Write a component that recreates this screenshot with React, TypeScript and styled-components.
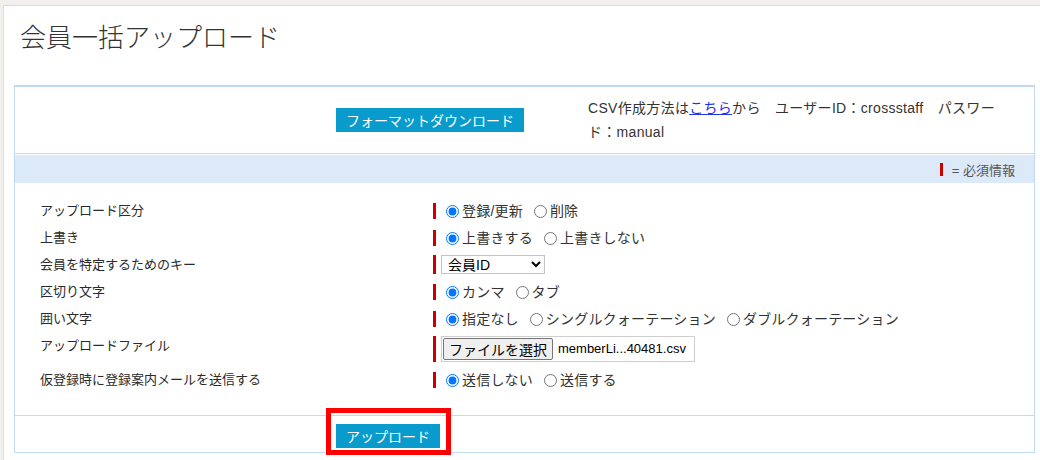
import { FC } from 'react'
import styled, { createGlobalStyle } from 'styled-components'

const GlobalStyle = createGlobalStyle`
  html, body {
    margin: 0;
    padding: 0;
    background: #f1f0ec;
    overflow: hidden;
  }
  body {
    font-family: "Liberation Sans", "Noto Sans CJK JP", sans-serif;
    color: #333;
  }
`

type Option = { label: string; checked?: boolean }
type Field =
  | { label: string; kind: 'radio'; name: string; options: Option[] }
  | { label: string; kind: 'select'; options: string[] }
  | { label: string; kind: 'file'; button: string; fileName: string }

const fields: Field[] = [
  { label: 'アップロード区分', kind: 'radio', name: 'mode', options: [{ label: '登録/更新', checked: true }, { label: '削除' }] },
  { label: '上書き', kind: 'radio', name: 'overwrite', options: [{ label: '上書きする', checked: true }, { label: '上書きしない' }] },
  { label: '会員を特定するためのキー', kind: 'select', options: ['会員ID', 'メールアドレス'] },
  { label: '区切り文字', kind: 'radio', name: 'sep', options: [{ label: 'カンマ', checked: true }, { label: 'タブ' }] },
  {
    label: '囲い文字',
    kind: 'radio',
    name: 'quote',
    options: [{ label: '指定なし', checked: true }, { label: 'シングルクォーテーション' }, { label: 'ダブルクォーテーション' }],
  },
  { label: 'アップロードファイル', kind: 'file', button: 'ファイルを選択', fileName: 'memberLi...40481.csv' },
  { label: '仮登録時に登録案内メールを送信する', kind: 'radio', name: 'mail', options: [{ label: '送信しない', checked: true }, { label: '送信する' }] },
]

const renderControl = (f: Field) => {
  if (f.kind === 'radio') {
    return f.options.map((o) => (
      <RadioLabel key={o.label}>
        <input type="radio" name={f.name} defaultChecked={o.checked} />
        {o.label}
      </RadioLabel>
    ))
  }
  if (f.kind === 'select') {
    return (
      <Select defaultValue={f.options[0]}>
        {f.options.map((o) => (
          <option key={o}>{o}</option>
        ))}
      </Select>
    )
  }
  return (
    <FileBox>
      <FileButton type="button">{f.button}</FileButton>
      <FileName>{f.fileName}</FileName>
    </FileBox>
  )
}

const App: FC = () => {
  return (
    <>
      <GlobalStyle />
      <Page>
        <Title>会員一括アップロード</Title>
        <Box>
          <TopSection>
            <BlueButton type="button">フォーマットダウンロード</BlueButton>
            <Info>
              CSV作成方法は<a href="#">こちら</a>から　ユーザーID：crossstaff　パスワード：manual
            </Info>
          </TopSection>
          <Band>
            <RequiredMark />= 必須情報
          </Band>
          <Form>
            {fields.map((f) => (
              <Row key={f.label}>
                <Label>{f.label}</Label>
                <Value>{renderControl(f)}</Value>
              </Row>
            ))}
          </Form>
          <Footer>
            <Marked>
              <BlueButton type="button">アップロード</BlueButton>
              <Highlight />
            </Marked>
          </Footer>
        </Box>
      </Page>
    </>
  )
}

const Page = styled.div`
  margin: 5px 0 0 3px;
  min-height: calc(100vh - 5px);
  box-sizing: border-box;
  background: #fff;
  border-top: 1px solid #c6ddf4;
  border-left: 1px solid #d9dfe6;
  padding-top: 12px;
`

const Title = styled.h1`
  margin: 0 0 31px 16px;
  font-family: "Noto Sans CJK JP", sans-serif;
  font-size: 26px;
  font-weight: 300;
  line-height: 36px;
  color: #333;
`

const Box = styled.div`
  margin: 0 5px 0 10px;
  border: 1px solid #c0daf4;
  border-top-width: 2px;
`

const TopSection = styled.div`
  display: flex;
  align-items: center;
  height: 66px;
  padding-left: 321px;
  gap: 64px;
  border-bottom: 1px solid #c0daf4;
`

const BlueButton = styled.button`
  height: 24px;
  padding: 0 10px;
  border: none;
  background: #0a9bcd;
  color: #fff;
  font-family: "Noto Sans CJK JP", sans-serif;
  font-size: 14px;
  line-height: 24px;
  cursor: pointer;
`

const Info = styled.div`
  width: 416px;
  font-size: 14px;
  line-height: 24px;
  letter-spacing: 0.3px;
  color: #333;

  a {
    color: #2233ee;
    text-decoration: underline;
  }
`

const Band = styled.div`
  margin-top: 1px;
  height: 28px;
  background: #dbe9f8;
  display: flex;
  align-items: center;
  justify-content: flex-end;
  padding-right: 19px;
  font-size: 13px;
  color: #555;
`

const RequiredMark = styled.span`
  display: inline-block;
  width: 3px;
  height: 13px;
  background: #cc0000;
  margin-right: 9px;
`

const Form = styled.div`
  padding: 14px 0 22px 25px;
`

const Row = styled.div`
  display: grid;
  grid-template-columns: 393px 1fr;
  align-items: start;
  padding: 4px 0;
`

const Label = styled.div`
  font-size: 13px;
  line-height: 19px;
  color: #2a2a2a;
`

const Value = styled.div`
  align-self: center;
  display: flex;
  align-items: center;
  min-height: 16px;
  border-left: 3px solid #cc0000;
  padding-left: 5px;
  font-size: 14px;
  line-height: 16px;
  letter-spacing: 0.2px;
  color: #333;
  white-space: pre;
`

const RadioLabel = styled.label`
  & + & {
    margin-left: 6px;
  }

  input {
    margin: 0 3px 0 5px;
    width: 13px;
    height: 13px;
    vertical-align: -2px;
  }
`

const Select = styled.select`
  width: 104px;
  height: 19px;
  font-family: "Liberation Sans", "Noto Sans CJK JP", sans-serif;
  font-size: 14px;
  color: #000;
  border: 1px solid #c4c4c4;
  border-radius: 0;
  background: #fff;
  padding: 0 2px;
`

const FileBox = styled.div`
  display: flex;
  align-items: center;
  width: 254px;
  height: 26px;
  box-sizing: border-box;
  border: 1px solid #cfcfcf;
  padding: 1px;
  overflow: hidden;
`

const FileButton = styled.button`
  height: 22px;
  padding: 0 5px;
  background: #efefef;
  border: 1px solid #767676;
  border-radius: 2px;
  font-family: "Noto Sans CJK JP", sans-serif;
  font-size: 14px;
  color: #000;
  line-height: 20px;
`

const FileName = styled.span`
  padding-left: 5px;
  font-size: 13px;
  letter-spacing: 0;
  color: #000;
`

const Footer = styled.div`
  border-top: 1px solid #c0daf4;
  padding: 8px 0 4px 321px;
`

const Marked = styled.span`
  position: relative;
  display: inline-block;
  vertical-align: top;
`

const Highlight = styled.span`
  position: absolute;
  top: -16px;
  left: -10px;
  right: -11px;
  bottom: -7px;
  border: 5px solid #ff0000;
  pointer-events: none;
`

export default App
